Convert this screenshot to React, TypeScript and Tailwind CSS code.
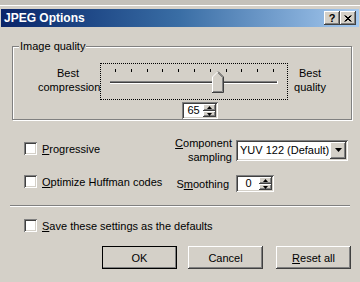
import React from "react";

const raised =
  "shadow-[inset_-1px_-1px_#404040,inset_1px_1px_#ffffff,inset_-2px_-2px_#808080,inset_2px_2px_#d4d0c8]";
const sunken =
  "shadow-[inset_1px_1px_#808080,inset_-1px_-1px_#ffffff,inset_2px_2px_#404040,inset_-2px_-2px_#d4d0c8]";

function Tri({ up, w = 5, h = 3 }: { up?: boolean; w?: number; h?: number }) {
  return (
    <svg width={w} height={h} viewBox={`0 0 ${w} ${h}`} className="block">
      <polygon
        points={up ? `0,${h} ${w / 2},0 ${w},${h}` : `0,0 ${w},0 ${w / 2},${h}`}
        fill="#000"
      />
    </svg>
  );
}

function Spin({ value, w }: { value: string; w: string }) {
  return (
    <div className={`flex h-[17px] ${w} bg-white p-[2px] ${sunken}`}>
      <div className="flex-1 text-center leading-[13px] bg-white">{value}</div>
      <div className="flex w-[13px] flex-col">
        <div className={`flex h-[7px] items-center justify-center bg-[#d4d0c8] ${raised}`}>
          <Tri up />
        </div>
        <div className={`flex h-[6px] items-center justify-center bg-[#d4d0c8] ${raised}`}>
          <Tri />
        </div>
      </div>
    </div>
  );
}

function Check() {
  return <div className={`h-[13px] w-[13px] shrink-0 bg-white ${sunken}`} />;
}

function Btn({ children, def }: { children: React.ReactNode; def?: boolean }) {
  return (
    <div
      className={`flex h-[23px] w-[75px] items-center justify-center bg-[#d4d0c8] ${
        def ? "outline outline-1 outline-black outline-offset-[-1px]" : ""
      } ${raised}`}
    >
      {children}
    </div>
  );
}

function Slider() {
  const ticks = Array.from({ length: 11 }, (_, i) => 14 + i * 15.8);
  return (
    <div className="h-[37px] w-[188px] border border-dotted border-black">
      <svg width="186" height="35" viewBox="0 0 186 35" className="block">
        {ticks.map((x, i) => (
          <rect key={i} x={Math.round(x)} y={5} width={1} height={3} fill="#000" />
        ))}
        <rect x={9} y={17} width={168} height={1} fill="#808080" />
        <rect x={9} y={18} width={168} height={1} fill="#404040" />
        <rect x={9} y={19} width={168} height={1} fill="#ffffff" />
        <rect x={176} y={17} width={1} height={3} fill="#ffffff" />
        <polygon points="111,13 117,7 123,13 123,29 111,29" fill="#d4d0c8" />
        <polyline points="111.5,29 111.5,13 117,7.5" fill="none" stroke="#ffffff" strokeWidth={1} />
        <polyline points="117,7.5 122.5,13 122.5,28.5 111,28.5" fill="none" stroke="#404040" strokeWidth={1} />
        <polyline points="117,9 121.5,13.5 121.5,27.5 112,27.5" fill="none" stroke="#808080" strokeWidth={1} />
      </svg>
    </div>
  );
}

export default function App() {
  return (
    <div className="h-[282px] w-[360px] overflow-hidden bg-[#d4d0c8] font-['Liberation_Sans',Arial,sans-serif] text-[11px] leading-[14px] text-black">
      <div className="h-[5px] bg-[#c4c1ba]" />
      <div className="h-[1px] bg-white" />
      <div className="h-[3px]" />
      {/* title bar */}
      <div className="mx-[1px] flex h-[18px] items-center justify-between bg-linear-to-r from-[#0a246a] via-[#3a6ea5] to-[#a6caf0] pl-[3px] pr-[3px]">
        <span className="text-[12px] font-bold leading-[18px] text-white">JPEG Options</span>
        <div className="flex">
          <div className={`flex h-[14px] w-[16px] items-center justify-center bg-[#d4d0c8] ${raised}`}>
            <span className="text-[11px] font-bold leading-[11px]">?</span>
          </div>
          <div className={`flex h-[14px] w-[16px] items-center justify-center bg-[#d4d0c8] ${raised}`}>
            <svg width="8" height="7" viewBox="0 0 8 7" className="block">
              <path d="M0.5 0.5 L6.5 6.5 M1.5 0.5 L7.5 6.5 M6.5 0.5 L0.5 6.5 M7.5 0.5 L1.5 6.5" stroke="#000" strokeWidth="1" />
            </svg>
          </div>
        </div>
      </div>

      {/* group box */}
      <fieldset className="ml-[12px] mt-[12px] h-[81px] w-[340px] border border-[#808080] p-0 shadow-[inset_1px_1px_#ffffff,1px_1px_#ffffff]">
        <legend className="ml-[6px] bg-[#d4d0c8] px-[1px] leading-[14px]">Image quality</legend>
        <div className="flex items-start">
          <div className="ml-[25px] mt-[13px] w-[60px] text-center">
            Best
            <br />
            compression
          </div>
          <div className="ml-[2px] mt-[10px] flex flex-col">
            <Slider />
            <div className="ml-[82px] mt-[2px]">
              <Spin value="65" w="w-[36px]" />
            </div>
          </div>
          <div className="ml-[2px] mt-[13px] w-[40px] text-center">
            Best
            <br />
            quality
          </div>
        </div>
      </fieldset>

      {/* options */}
      <div className="flex h-[85px]">
        <div className="w-[170px] pl-[24px]">
          <div className="mt-[22px] flex h-[13px] items-center">
            <Check />
            <span className="ml-[5px]">
              <span className="underline">P</span>rogressive
            </span>
          </div>
          <div className="mt-[20px] flex h-[13px] items-center">
            <Check />
            <span className="ml-[5px]">
              <span className="underline">O</span>ptimize Huffman codes
            </span>
          </div>
        </div>
        <div className="flex flex-col">
          <div className="mt-[16px] flex h-[28px] items-center">
            <div className="w-[62px] text-right">
              <span className="underline">C</span>omponent
              <br />
              sampling
            </div>
            <div className={`ml-[4px] flex h-[21px] w-[112px] bg-white p-[2px] ${sunken}`}>
              <div className="flex-1 pl-[2px] leading-[17px]">YUV 122 (Default)</div>
              <div className={`flex h-[17px] w-[16px] items-center justify-center bg-[#d4d0c8] ${raised}`}>
                <Tri w={7} h={4} />
              </div>
            </div>
          </div>
          <div className="mt-[11px] flex h-[17px] items-center">
            <div className="w-[62px] pr-[3px] text-right">
              S<span className="underline">m</span>oothing
            </div>
            <div className="ml-[4px]">
              <Spin value="0" w="w-[38px]" />
            </div>
          </div>
        </div>
      </div>

      {/* separator */}
      <div className="ml-[10px] h-[1px] w-[340px] bg-[#808080]" />
      <div className="ml-[10px] h-[1px] w-[340px] bg-white" />

      <div className="ml-[24px] mt-[12px] flex h-[13px] items-center">
        <Check />
        <span className="ml-[5px]">
          <span className="underline">S</span>ave these settings as the defaults
        </span>
      </div>

      <div className="ml-[102px] mt-[14px] flex">
        <Btn def>OK</Btn>
        <div className="ml-[11px]">
          <Btn>Cancel</Btn>
        </div>
        <div className="ml-[13px]">
          <Btn>
            <span>
              <span className="underline">R</span>eset all
            </span>
          </Btn>
        </div>
      </div>
    </div>
  );
}
